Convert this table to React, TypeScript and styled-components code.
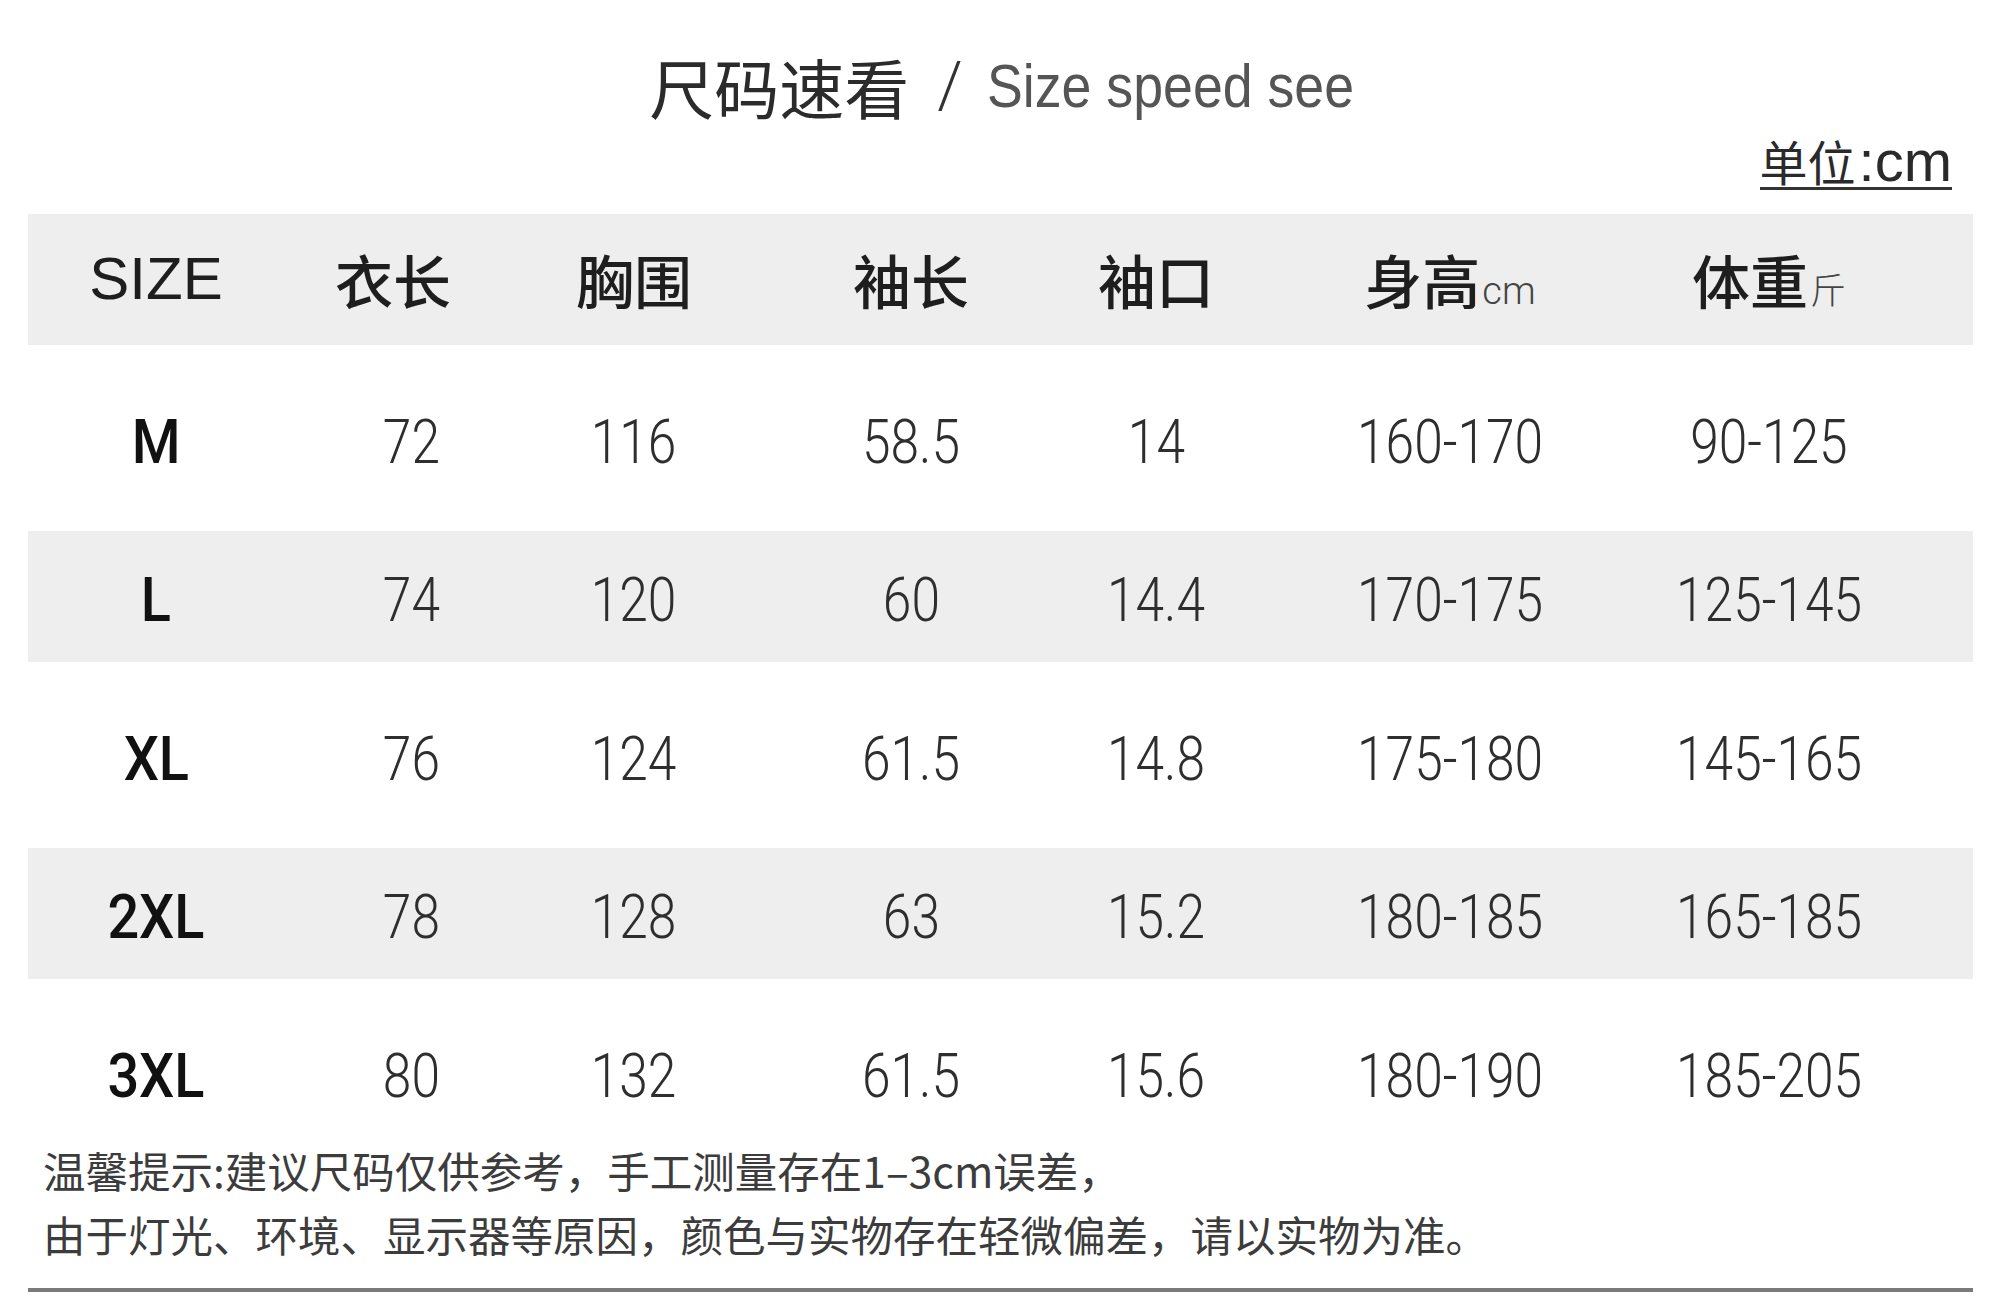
import React from 'react';
import styled, { createGlobalStyle } from 'styled-components';

const GlobalStyle = createGlobalStyle`
  html, body {
    margin: 0;
    padding: 0;
    background: #fff;
  }
  body {
    font-family: 'Noto Sans CJK SC', 'Noto Sans', sans-serif;
  }
`;

const Page = styled.div`
  width: 2000px;
  height: 1309px;
  box-sizing: border-box;
  padding: 46px 27px 0 28px;
  background: #fff;
  overflow: hidden;
`;

const Title = styled.div`
  height: 80px;
  margin-bottom: 3px;
  display: flex;
  align-items: center;
  justify-content: center;
  padding-left: 4px;
`;

const TitleCn = styled.span`
  font-family: 'Noto Sans CJK SC', sans-serif;
  font-size: 65px;
  line-height: 80px;
  color: #2b2b2b;
`;

const Slash = styled.span`
  font-family: Roboto, sans-serif;
  font-weight: 300;
  font-size: 64px;
  line-height: 80px;
  color: #333;
  margin: 0 24px 0 28px;
`;

const Squeeze = styled.span<{ $x: number }>`
  display: inline-block;
  transform: scaleX(${(p) => p.$x});
  transform-origin: center;
`;

const TitleEn = styled(Squeeze)`
  font-family: 'Liberation Sans', Arial, sans-serif;
  font-size: 61px;
  line-height: 80px;
  color: #555;
  transform-origin: left center;
  margin-right: -48px;
`;

const UnitRow = styled.div`
  height: 85px;
  box-sizing: border-box;
  display: flex;
  justify-content: flex-end;
  align-items: flex-start;
  padding: 5px 21px 0 0;
`;

const Unit = styled.span`
  font-family: 'Noto Sans CJK SC', sans-serif;
  font-size: 48px;
  line-height: 52px;
  color: #2a2a2a;
  border-bottom: 3px solid #333;
`;

const UnitLatin = styled.span`
  font-family: 'Liberation Sans', Arial, sans-serif;
  font-size: 58px;
  margin-left: 3px;
`;

const Table = styled.div`
  display: flex;
  flex-direction: column;
`;

const Row = styled.div<{ $shaded?: boolean; $pad: string }>`
  display: grid;
  grid-template-columns: 256px 218px 264px 290px 200px 388px 250px 1fr;
  align-items: center;
  padding: ${(p) => p.$pad};
  background: ${(p) => (p.$shaded ? '#eeeeee' : '#fff')};
`;

const Cell = styled.div<{ $nudge?: number }>`
  display: flex;
  justify-content: center;
  align-items: baseline;
  height: 62px;
  line-height: 62px;
  padding-left: ${(p) => p.$nudge ?? 0}px;
  white-space: nowrap;
`;

const HeadEn = styled.span`
  font-family: 'Liberation Sans', Arial, sans-serif;
  font-size: 60px;
  color: #1e1e1e;
`;

const HeadCn = styled.span`
  font-family: 'Noto Sans CJK SC', sans-serif;
  font-weight: 500;
  font-size: 58px;
  color: #1e1e1e;
`;

const HeadUnit = styled.span<{ $cjk?: boolean }>`
  font-family: ${(p) => (p.$cjk ? "'Noto Sans CJK SC', sans-serif" : 'Roboto, sans-serif')};
  font-weight: 300;
  font-size: ${(p) => (p.$cjk ? 36 : 38)}px;
  color: #444;
  margin-left: 2px;
`;

const SizeLabel = styled(Squeeze)`
  font-family: Roboto, sans-serif;
  font-weight: 500;
  font-size: 62px;
  color: #111;
`;

const Num = styled(Squeeze)`
  font-family: Roboto, sans-serif;
  font-weight: 300;
  font-size: 62px;
  color: #2e2e2e;
`;

const Notes = styled.div`
  margin-top: 31px;
  padding-left: 15px;
  font-family: 'Noto Sans CJK SC', sans-serif;
  font-size: 42.5px;
  line-height: 64px;
  color: #3c3c3c;
`;

const NoteLine = styled.div`
  white-space: nowrap;
`;

const BottomRule = styled.div`
  margin-top: 22px;
  height: 4px;
  background: #7a7a7a;
`;

interface SizeRow {
  size: string;
  values: string[];
}

const rows: SizeRow[] = [
  { size: 'M', values: ['72', '116', '58.5', '14', '160-170', '90-125'] },
  { size: 'L', values: ['74', '120', '60', '14.4', '170-175', '125-145'] },
  { size: 'XL', values: ['76', '124', '61.5', '14.8', '175-180', '145-165'] },
  { size: '2XL', values: ['78', '128', '63', '15.2', '180-185', '165-185'] },
  { size: '3XL', values: ['80', '132', '61.5', '15.6', '180-190', '185-205'] },
];

const headers = ['衣长', '胸围', '袖长', '袖口'];

export default function App() {
  return (
    <>
      <GlobalStyle />
      <Page>
        <Title>
          <TitleCn>尺码速看</TitleCn>
          <Slash>/</Slash>
          <TitleEn $x={0.88}>Size speed see</TitleEn>
        </Title>
        <UnitRow>
          <Unit>
            单位<UnitLatin>:cm</UnitLatin>
          </Unit>
        </UnitRow>
        <Table>
          <Row $shaded $pad="34px 0 35px">
            <Cell>
              <HeadEn>SIZE</HeadEn>
            </Cell>
            {headers.map((h) => (
              <Cell key={h}>
                <HeadCn>{h}</HeadCn>
              </Cell>
            ))}
            <Cell>
              <HeadCn>身高</HeadCn>
              <HeadUnit>cm</HeadUnit>
            </Cell>
            <Cell>
              <HeadCn>体重</HeadCn>
              <HeadUnit $cjk>斤</HeadUnit>
            </Cell>
          </Row>
          {rows.map((r, i) => {
            const shaded = i % 2 === 1;
            const last = i === rows.length - 1;
            const pad = shaded ? '38px 0 31px' : last ? '66px 0 0' : '66px 0 58px';
            return (
              <Row key={r.size} $shaded={shaded} $pad={pad}>
                <Cell>
                  <SizeLabel $x={0.9}>{r.size}</SizeLabel>
                </Cell>
                {r.values.map((v, j) => (
                  <Cell key={j} $nudge={j === 0 ? 36 : 0}>
                    <Num $x={0.83}>{v}</Num>
                  </Cell>
                ))}
              </Row>
            );
          })}
        </Table>
        <Notes>
          <NoteLine>温馨提示:建议尺码仅供参考，手工测量存在1–3cm误差，</NoteLine>
          <NoteLine>由于灯光、环境、显示器等原因，颜色与实物存在轻微偏差，请以实物为准。</NoteLine>
        </Notes>
        <BottomRule />
      </Page>
    </>
  );
}
